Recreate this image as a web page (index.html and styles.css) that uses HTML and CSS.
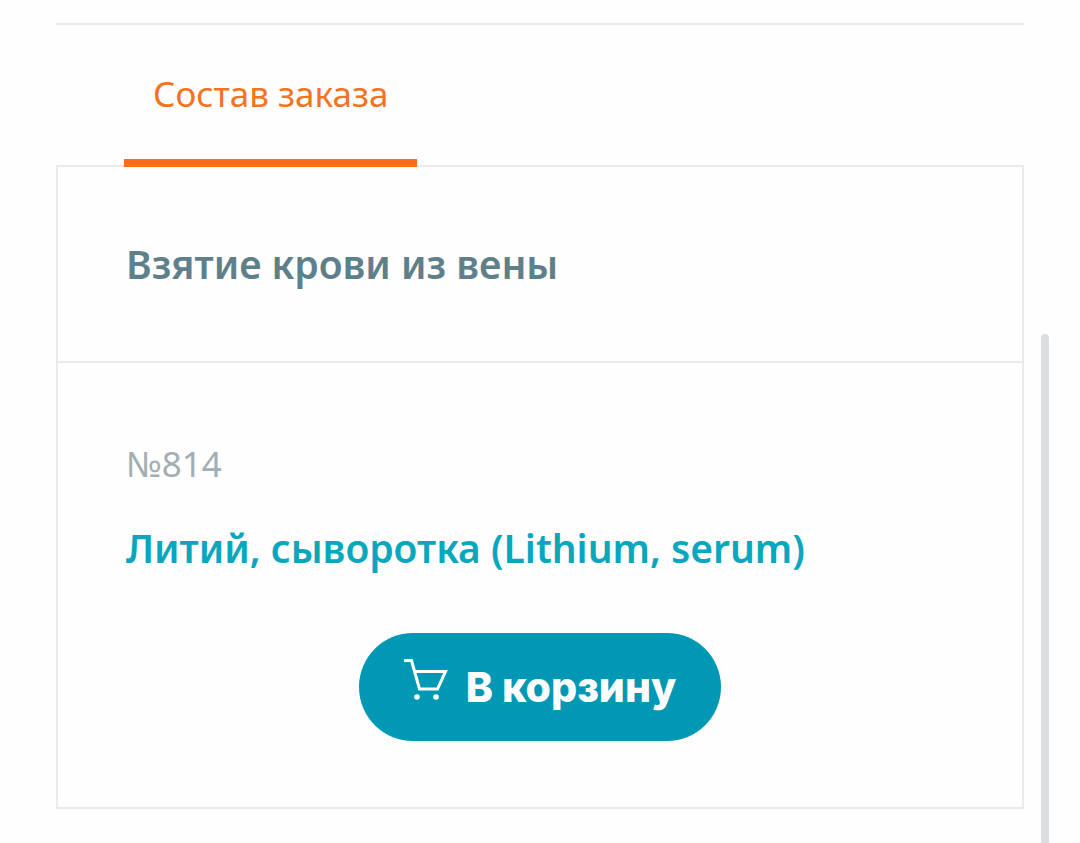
FILE: index.html
```
<!DOCTYPE html>
<html lang="ru">

<head>
    <meta charset="UTF-8">
    <meta name="viewport" content="width=device-width, initial-scale=1">
    <title>Состав заказа</title>
    <link rel="stylesheet" href="styles.css">
</head>

<body>

    <main class="order">
        <nav class="tabs">
            <a href="#composition" class="tab active">Состав заказа</a>
        </nav>

        <div class="order-list" id="composition">
            <section class="order-row">
                <h2 class="service-title">Взятие крови из вены</h2>
            </section>

            <section class="order-row order-item">
                <p class="item-number">№814</p>
                <h2 class="item-title"><a href="#item-814">Литий, сыворотка (Lithium, serum)</a></h2>
                <button type="button" class="cart-button">
                    <svg class="cart-icon" viewBox="0 0 44 42" aria-hidden="true">
                        <path d="M0 1.5H7.5L15.5 30H33.5L41.5 12.5H10.5" />
                        <circle cx="13" cy="38" r="2.8" />
                        <circle cx="32" cy="38" r="2.8" />
                    </svg>
                    <span>В корзину</span>
                </button>
            </section>
        </div>
    </main>

    <!-- Полоса прокрутки -->
    <div class="scroll-thumb"></div>

</body>

</html>
```
FILE: styles.css
```
* {
    box-sizing: border-box;
}

body {
    margin: 0;
    background-color: #fefefe;
    font-family: "Noto Sans", "Open Sans", sans-serif;
}

h2,
p {
    margin: 0;
}

a {
    color: inherit;
    text-decoration: none;
}

.order {
    margin: 23px 56px 34px;
    border-top: 2px solid #e9ebeb;
}

.tabs {
    display: flex;
    padding: 0 68px;
}

.tab {
    padding: 44px 29px 40px;
    font-size: 35px;
    line-height: 50px;
    border-bottom: 8px solid transparent;
}

.tab.active {
    position: relative;
    z-index: 1;
    color: #f47321;
    border-bottom-color: #ff6c17;
}

.order-list {
    margin-top: -2px;
    border: 2px solid #e9ebeb;
}

.order-row {
    padding: 66px 68px;
}

.order-row + .order-row {
    border-top: 2px solid #e9ebeb;
}

.service-title,
.item-title {
    font-size: 39px;
    line-height: 62px;
    font-weight: 600;
}

.service-title {
    color: #5f7f8a;
}

.order-item {
    display: flex;
    flex-direction: column;
}

.item-number {
    margin-bottom: 26px;
    padding-top: 8px;
    font-size: 35px;
    line-height: 54px;
    color: #a1afb2;
}

.item-title {
    margin-bottom: 54px;
    color: #08a7be;
}

.cart-button {
    display: flex;
    align-self: center;
    gap: 18px;
    padding: 26px 45px;
    border: 0;
    border-radius: 54px;
    background-color: #0098b5;
    color: #fff;
    font-family: Inter, "Open Sans", sans-serif;
    font-size: 41px;
    line-height: 56px;
    font-weight: 800;
    cursor: pointer;
}

.cart-icon {
    width: 44px;
    height: 42px;
    fill: none;
    stroke: #fff;
    stroke-width: 3;
}

.cart-icon circle {
    fill: #fff;
    stroke: none;
}

.scroll-thumb {
    position: fixed;
    top: 334px;
    right: 31px;
    bottom: 0;
    width: 8px;
    border-radius: 4px 4px 0 0;
    background-color: #dcddde;
}
```
